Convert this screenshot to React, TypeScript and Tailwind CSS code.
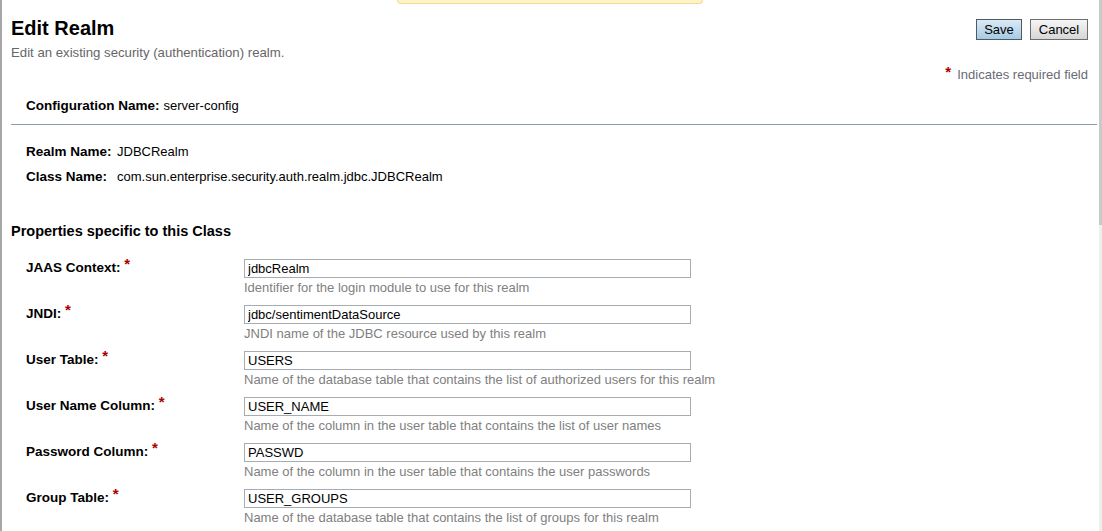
import React from 'react';

const fields = [
  { label: 'JAAS Context:', value: 'jdbcRealm', help: 'Identifier for the login module to use for this realm' },
  { label: 'JNDI:', value: 'jdbc/sentimentDataSource', help: 'JNDI name of the JDBC resource used by this realm' },
  { label: 'User Table:', value: 'USERS', help: 'Name of the database table that contains the list of authorized users for this realm' },
  { label: 'User Name Column:', value: 'USER_NAME', help: 'Name of the column in the user table that contains the list of user names' },
  { label: 'Password Column:', value: 'PASSWD', help: 'Name of the column in the user table that contains the user passwords' },
  { label: 'Group Table:', value: 'USER_GROUPS', help: 'Name of the database table that contains the list of groups for this realm' },
];

const Star: React.FC = () => (
  <span className="relative -top-[3px] text-[15px] font-bold text-[#aa0000]">*</span>
);

const App: React.FC = () => {
  return (
    <div className="flex h-[531px] overflow-hidden bg-white font-['Liberation_Sans',Arial,sans-serif] text-[13px] leading-[16px] text-black">
      <div className="w-[2px] shrink-0 bg-[#a6a6a6]"></div>

      <div className="relative flex-1">
        {/* alert strip peeking in at the top */}
        <div className="absolute left-[395px] top-0 h-[4px] w-[306px] rounded-b-[4px] border border-t-0 border-[#eedb96] bg-[#fcf4c6]"></div>

        {/* Header */}
        <div className="flex items-start justify-between pl-[9px] pr-[11px] pt-[16px]">
          <h1 className="text-[20px] font-bold leading-[24px]">Edit Realm</h1>
          <div className="mt-[3px] flex gap-[8px]">
            <button className="h-[21px] w-[46px] border border-[#4e5a66] bg-gradient-to-b from-[#dbeaf5] to-[#a6cae4] text-[13px] leading-[19px] text-black">
              Save
            </button>
            <button className="h-[21px] w-[58px] border border-[#6e6e6e] bg-gradient-to-b from-[#f6f6f6] to-[#d6d6d6] text-[13px] leading-[19px] text-black">
              Cancel
            </button>
          </div>
        </div>
        <p className="mt-[5px] pl-[9px] text-[13.2px] text-[#666666]">Edit an existing security (authentication) realm.</p>

        <div className="mt-[6px] flex justify-end pr-[11px] text-[#6a6a78]">
          <Star />
          <span className="ml-[6px]">Indicates required field</span>
        </div>

        {/* Configuration */}
        <div className="mt-[15px] flex gap-[4px] pl-[24px]">
          <span className="text-[13.5px] font-bold">Configuration Name:</span>
          <span>server-config</span>
        </div>
        <div className="ml-[9px] mr-[2px] mt-[10px] h-px bg-[#8c9ea9]"></div>

        <div className="mt-[19px] grid grid-cols-[91px_1fr] gap-y-[9px] pl-[24px]">
          <span className="text-[13.5px] font-bold">Realm Name:</span>
          <span>JDBCRealm</span>
          <span className="text-[13.5px] font-bold">Class Name:</span>
          <span>com.sun.enterprise.security.auth.realm.jdbc.JDBCRealm</span>
        </div>

        <h2 className="mt-[38px] pl-[9px] text-[14.5px] font-bold leading-[16px]">Properties specific to this Class</h2>

        <div className="mt-[20px] flex flex-col gap-[9px] pl-[24px]">
          {fields.map((f) => (
            <div key={f.label} className="flex">
              <div className="w-[218px] shrink-0 text-[13.5px] font-bold">
                {f.label} <Star />
              </div>
              <div className="flex flex-col">
                <input
                  readOnly
                  value={f.value}
                  className="h-[19px] w-[447px] border border-[#a5acb2] bg-white px-[3px] text-[13px] leading-[17px] text-black outline-none"
                />
                <span className="mt-[2px] text-[#808080]">{f.help}</span>
              </div>
            </div>
          ))}
        </div>
      </div>

      <div className="flex w-[3px] shrink-0 flex-col">
        <div className="h-[225px] bg-[#c9c9c9]"></div>
        <div className="flex-1 bg-[#eeeeee]"></div>
      </div>
    </div>
  );
};

export default App;
